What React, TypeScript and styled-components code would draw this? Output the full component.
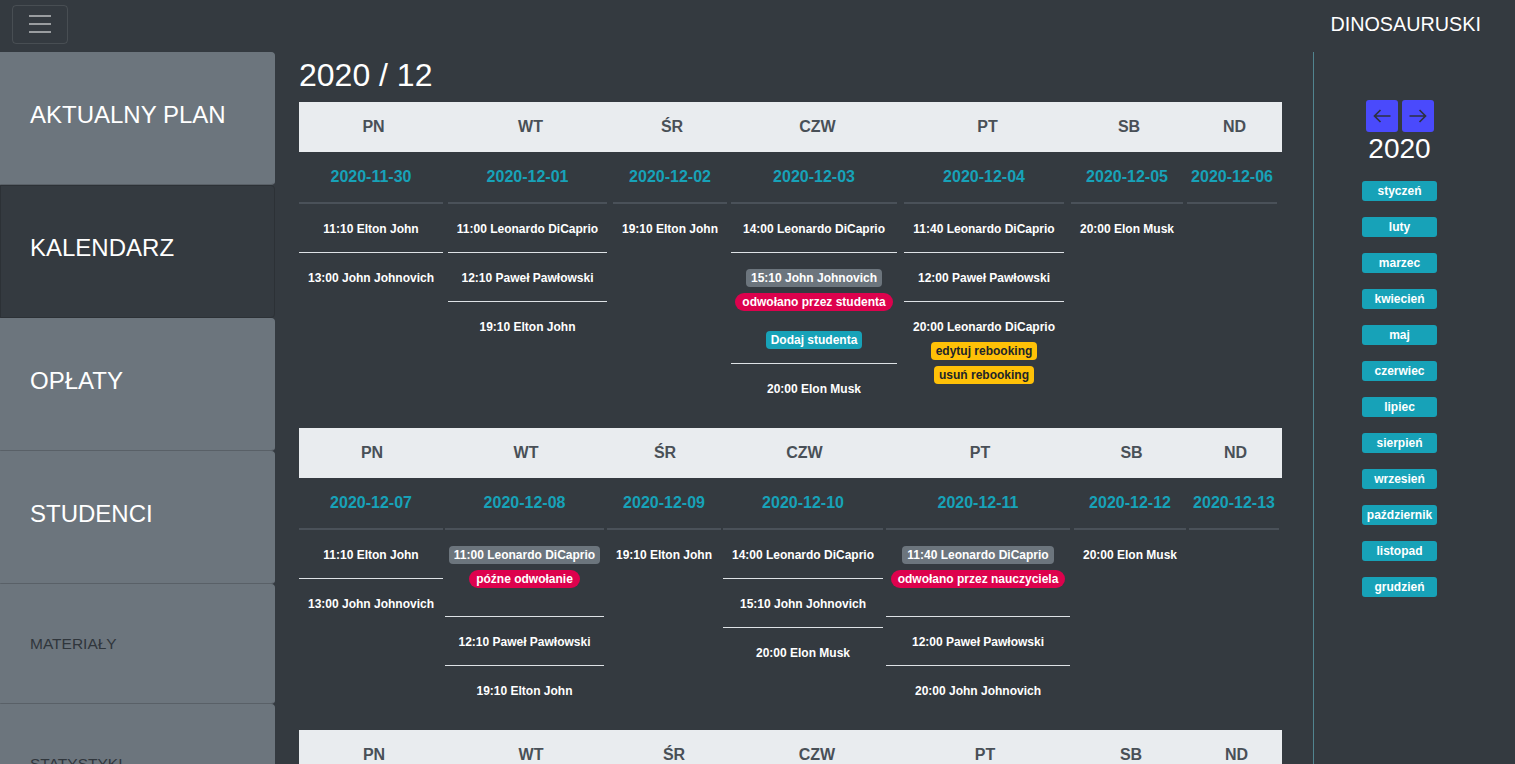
import React from "react";
import styled, { createGlobalStyle, css } from "styled-components";

const GlobalStyle = createGlobalStyle`
  html, body {
    margin: 0;
    padding: 0;
    background: #343a40;
    overflow: hidden;
  }
  body {
    font-family: "Liberation Sans", Arial, Helvetica, sans-serif;
    color: #fff;
  }
  *, *::before, *::after { box-sizing: border-box; }
`;

const Page = styled.div`
  height: 100vh;
  display: flex;
  flex-direction: column;
  overflow: hidden;
  background: #343a40;
`;

const Navbar = styled.header`
  height: 48px;
  flex: none;
  display: flex;
  align-items: center;
  justify-content: space-between;
  padding: 0 34px 0 12px;
`;

const Toggler = styled.button`
  width: 56px;
  height: 39px;
  padding: 0;
  display: flex;
  align-items: center;
  justify-content: center;
  background: transparent;
  border: 1px solid rgba(255, 255, 255, 0.1);
  border-radius: 4px;
`;

const Brand = styled.div`
  font-size: 19.8px;
  line-height: 30px;
  color: #fff;
`;

const Body = styled.div`
  flex: 1;
  min-height: 0;
  display: flex;
  margin-top: 4px;
`;

const Sidebar = styled.nav`
  width: 275px;
  flex: none;
  display: flex;
  flex-direction: column;
`;

const SideButton = styled.div<{ $active?: boolean; $small?: boolean }>`
  flex: none;
  border: 1px solid #6c757d;
  border-bottom-color: #596067;
  border-radius: 0 4px 4px 0;
  background: #6c757d;
  color: #fff;
  font-size: 24px;
  line-height: 36px;
  padding: 44px 30px 51px 29px;
  white-space: nowrap;
  ${(p) =>
    p.$active &&
    css`
      background: #343a40;
      border-color: #2c3136;
    `}
  ${(p) =>
    p.$small &&
    css`
      font-size: 15.5px;
      line-height: 23px;
      padding: 47px 30px 48px 29px;
      color: #30363c;
    `}
`;

const Main = styled.main`
  flex: 1;
  min-width: 0;
  padding: 4px 31px 0 24px;
  overflow: hidden;
`;

const Title = styled.h2`
  margin: 0 0 8px;
  font-size: 32px;
  font-weight: 400;
  line-height: 38.4px;
  color: #fff;
`;

const WeekGrid = styled.div<{ $cols: string }>`
  display: grid;
  grid-template-columns: ${(p) => p.$cols};
  align-items: start;
  margin-bottom: 16px;
`;

const HeadCell = styled.div`
  height: 50px;
  background: #e9ecef;
  color: #495057;
  font-size: 16px;
  font-weight: 700;
  display: flex;
  align-items: center;
  justify-content: center;
`;

const DayCol = styled.div<{ $gap: number }>`
  padding-right: ${(p) => p.$gap}px;
`;

const DateCell = styled.div`
  padding: 13px 0;
  line-height: 24px;
  text-align: center;
  color: #17a2b8;
  font-size: 16px;
  font-weight: 700;
  border-bottom: 2px solid #4a5159;
`;

const SlotBox = styled.div`
  padding: 16px 0 14px;
  display: flex;
  flex-direction: column;
  align-items: center;
  gap: 6px;
  border-bottom: 1px solid #dee2e6;
  &:last-child {
    border-bottom: none;
  }
`;

const SlotText = styled.div`
  height: 18px;
  line-height: 18px;
  font-size: 12px;
  font-weight: 700;
  color: #fff;
  white-space: nowrap;
`;

type Tone = "secondary" | "danger" | "info" | "warning";

const toneBg: Record<Tone, string> = {
  secondary: "#6c757d",
  danger: "#dd024d",
  info: "#17a2b8",
  warning: "#ffc107",
};

const Badge = styled.span<{ $tone: Tone; $pill?: boolean }>`
  display: inline-flex;
  align-items: center;
  height: 18px;
  padding: 0 ${(p) => (p.$pill ? 7 : 5)}px;
  border-radius: ${(p) => (p.$pill ? 10 : 4)}px;
  background: ${(p) => toneBg[p.$tone]};
  color: ${(p) => (p.$tone === "warning" ? "#212529" : "#fff")};
  font-size: 12px;
  font-weight: 700;
  line-height: 1;
  white-space: nowrap;
  ${(p) =>
    p.$pill &&
    css`
      margin-bottom: 14px;
    `}
`;

const Aside = styled.aside`
  width: 202px;
  flex: none;
  border-left: 1px solid #51848f;
  padding: 48px 30px 0 0;
  display: flex;
  flex-direction: column;
  align-items: center;
`;

const ArrowRow = styled.div`
  display: flex;
  gap: 4px;
`;

const ArrowButton = styled.button`
  width: 32px;
  height: 32px;
  padding: 0;
  border: none;
  border-radius: 3px;
  background: #4a4afc;
  display: flex;
  align-items: center;
  justify-content: center;
`;

const Year = styled.div`
  font-size: 28px;
  line-height: 33.6px;
  color: #fff;
`;

const MonthList = styled.div`
  margin-top: 15px;
  display: flex;
  flex-direction: column;
  gap: 16px;
`;

const MonthButton = styled.div`
  width: 75px;
  height: 20px;
  border-radius: 3px;
  background: #17a2b8;
  color: #fff;
  font-size: 12px;
  font-weight: 700;
  display: flex;
  align-items: center;
  justify-content: center;
  white-space: nowrap;
`;

type Slot = {
  time: string;
  badge?: boolean;
  cancel?: string;
  add?: boolean;
  rebook?: boolean;
};

type Day = { date: string; slots: Slot[] };

type Week = { widths: number[]; gaps: number[]; days: Day[] };

const DAY_NAMES = ["PN", "WT", "ŚR", "CZW", "PT", "SB", "ND"];

const weeks: Week[] = [
  {
    widths: [149, 165, 118, 173, 167, 116, 95],
    gaps: [5, 6, 4, 7, 7, 4, 5],
    days: [
      { date: "2020-11-30", slots: [{ time: "11:10 Elton John" }, { time: "13:00 John Johnovich" }] },
      {
        date: "2020-12-01",
        slots: [
          { time: "11:00 Leonardo DiCaprio" },
          { time: "12:10 Paweł Pawłowski" },
          { time: "19:10 Elton John" },
        ],
      },
      { date: "2020-12-02", slots: [{ time: "19:10 Elton John" }] },
      {
        date: "2020-12-03",
        slots: [
          { time: "14:00 Leonardo DiCaprio" },
          { time: "15:10 John Johnovich", badge: true, cancel: "odwołano przez studenta", add: true },
          { time: "20:00 Elon Musk" },
        ],
      },
      {
        date: "2020-12-04",
        slots: [
          { time: "11:40 Leonardo DiCaprio" },
          { time: "12:00 Paweł Pawłowski" },
          { time: "20:00 Leonardo DiCaprio", rebook: true },
        ],
      },
      { date: "2020-12-05", slots: [{ time: "20:00 Elon Musk" }] },
      { date: "2020-12-06", slots: [] },
    ],
  },
  {
    widths: [146, 162, 116, 163, 188, 115, 93],
    gaps: [2, 3, 2, 3, 4, 3, 3],
    days: [
      { date: "2020-12-07", slots: [{ time: "11:10 Elton John" }, { time: "13:00 John Johnovich" }] },
      {
        date: "2020-12-08",
        slots: [
          { time: "11:00 Leonardo DiCaprio", badge: true, cancel: "późne odwołanie" },
          { time: "12:10 Paweł Pawłowski" },
          { time: "19:10 Elton John" },
        ],
      },
      { date: "2020-12-09", slots: [{ time: "19:10 Elton John" }] },
      {
        date: "2020-12-10",
        slots: [
          { time: "14:00 Leonardo DiCaprio" },
          { time: "15:10 John Johnovich" },
          { time: "20:00 Elon Musk" },
        ],
      },
      {
        date: "2020-12-11",
        slots: [
          { time: "11:40 Leonardo DiCaprio", badge: true, cancel: "odwołano przez nauczyciela" },
          { time: "12:00 Paweł Pawłowski" },
          { time: "20:00 John Johnovich" },
        ],
      },
      { date: "2020-12-12", slots: [{ time: "20:00 Elon Musk" }] },
      { date: "2020-12-13", slots: [] },
    ],
  },
  {
    widths: [150, 164, 122, 164, 172, 120, 91],
    gaps: [4, 4, 4, 4, 4, 4, 4],
    days: [
      { date: "2020-12-14", slots: [{ time: "11:10 Elton John" }, { time: "13:00 John Johnovich" }] },
      {
        date: "2020-12-15",
        slots: [
          { time: "11:00 Leonardo DiCaprio" },
          { time: "12:10 Paweł Pawłowski" },
          { time: "19:10 Elton John" },
        ],
      },
      { date: "2020-12-16", slots: [{ time: "19:10 Elton John" }] },
      {
        date: "2020-12-17",
        slots: [
          { time: "14:00 Leonardo DiCaprio" },
          { time: "15:10 John Johnovich" },
          { time: "20:00 Elon Musk" },
        ],
      },
      {
        date: "2020-12-18",
        slots: [
          { time: "11:40 Leonardo DiCaprio" },
          { time: "12:00 Paweł Pawłowski" },
          { time: "20:00 John Johnovich" },
        ],
      },
      { date: "2020-12-19", slots: [{ time: "20:00 Elon Musk" }] },
      { date: "2020-12-20", slots: [] },
    ],
  },
];

const MONTHS = [
  "styczeń",
  "luty",
  "marzec",
  "kwiecień",
  "maj",
  "czerwiec",
  "lipiec",
  "sierpień",
  "wrzesień",
  "październik",
  "listopad",
  "grudzień",
];

const TogglerIcon = () => (
  <svg width="30" height="30" viewBox="0 0 30 30" aria-hidden="true">
    <path
      d="M4 7h22M4 15h22M4 23h22"
      stroke="rgba(255,255,255,0.5)"
      strokeWidth="2"
      strokeLinecap="butt"
      fill="none"
    />
  </svg>
);

const ArrowIcon = ({ dir }: { dir: "left" | "right" }) => (
  <svg width="20" height="20" viewBox="0 0 20 20" aria-hidden="true">
    {dir === "left" ? (
      <path d="M18.5 10H2.5M8.5 4L2.5 10L8.5 16" stroke="#2d3140" strokeWidth="1.7" fill="none" />
    ) : (
      <path d="M1.5 10H17.5M11.5 4L17.5 10L11.5 16" stroke="#2d3140" strokeWidth="1.7" fill="none" />
    )}
  </svg>
);

const SlotView = ({ slot }: { slot: Slot }) => (
  <SlotBox>
    {slot.badge ? <Badge $tone="secondary">{slot.time}</Badge> : <SlotText>{slot.time}</SlotText>}
    {slot.cancel && (
      <Badge $tone="danger" $pill>
        {slot.cancel}
      </Badge>
    )}
    {slot.add && <Badge $tone="info">Dodaj studenta</Badge>}
    {slot.rebook && <Badge $tone="warning">edytuj rebooking</Badge>}
    {slot.rebook && <Badge $tone="warning">usuń rebooking</Badge>}
  </SlotBox>
);

const WeekView = ({ week }: { week: Week }) => (
  <WeekGrid $cols={week.widths.map((w) => `${w}px`).join(" ")}>
    {DAY_NAMES.map((n) => (
      <HeadCell key={n}>{n}</HeadCell>
    ))}
    {week.days.map((d, i) => (
      <DayCol key={d.date} $gap={week.gaps[i]}>
        <DateCell>{d.date}</DateCell>
        {d.slots.map((s, j) => (
          <SlotView key={j} slot={s} />
        ))}
      </DayCol>
    ))}
  </WeekGrid>
);

export default function App() {
  return (
    <Page>
      <GlobalStyle />
      <Navbar>
        <Toggler aria-label="menu">
          <TogglerIcon />
        </Toggler>
        <Brand>DINOSAURUSKI</Brand>
      </Navbar>
      <Body>
        <Sidebar>
          <SideButton>AKTUALNY PLAN</SideButton>
          <SideButton $active>KALENDARZ</SideButton>
          <SideButton>OPŁATY</SideButton>
          <SideButton>STUDENCI</SideButton>
          <SideButton $small>MATERIAŁY</SideButton>
          <SideButton $small>STATYSTYKI</SideButton>
        </Sidebar>
        <Main>
          <Title>2020 / 12</Title>
          {weeks.map((w, i) => (
            <WeekView key={i} week={w} />
          ))}
        </Main>
        <Aside>
          <ArrowRow>
            <ArrowButton aria-label="poprzedni">
              <ArrowIcon dir="left" />
            </ArrowButton>
            <ArrowButton aria-label="następny">
              <ArrowIcon dir="right" />
            </ArrowButton>
          </ArrowRow>
          <Year>2020</Year>
          <MonthList>
            {MONTHS.map((m) => (
              <MonthButton key={m}>{m}</MonthButton>
            ))}
          </MonthList>
        </Aside>
      </Body>
    </Page>
  );
}
